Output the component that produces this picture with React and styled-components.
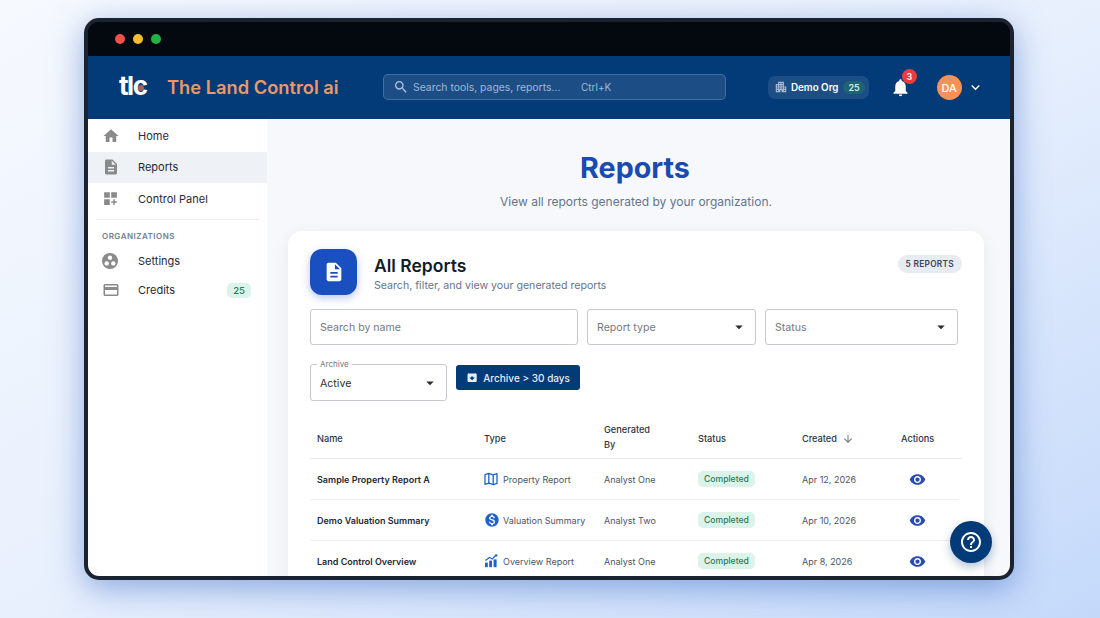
import styled, { createGlobalStyle } from "styled-components";
import {
  MdHome, MdDescription, MdDashboardCustomize, MdCreditCard,
  MdMonetizationOn, MdVisibility, MdArchive, MdArrowDropDown, MdArrowDownward,
  MdNotifications, MdKeyboardArrowDown, MdHelpOutline, MdSearch, MdApartment,
} from "react-icons/md";

const GlobalStyle = createGlobalStyle`
  html, body { margin: 0; padding: 0; height: 100%; overflow: hidden; }
  body { font-family: Inter, "Liberation Sans", sans-serif; color: #1a2433; }
  * { box-sizing: border-box; }
`;

const reports = [
  { name: "Sample Property Report A", type: "Property Report", kind: "map", by: "Analyst One", date: "Apr 12, 2026" },
  { name: "Demo Valuation Summary", type: "Valuation Summary", kind: "money", by: "Analyst Two", date: "Apr 10, 2026" },
  { name: "Land Control Overview", type: "Overview Report", kind: "chart", by: "Analyst One", date: "Apr 8, 2026" },
];

const MapIcon = () => (
  <svg width="14" height="14" viewBox="0 0 14 14" fill="none" stroke="#1f62c9" strokeWidth="1.3" strokeLinejoin="round">
    <path d="M1 2.6 4.8 1.4 9.2 2.8 13 1.6V11.4L9.2 12.6 4.8 11.2 1 12.4Z" />
    <path d="M4.8 1.4V11.2M9.2 2.8V12.6" />
  </svg>
);

const ChartIcon = () => (
  <svg width="14" height="14" viewBox="0 0 14 14" fill="#1f62c9">
    <rect x="1" y="8.6" width="2.8" height="4.6" />
    <rect x="5.2" y="6.6" width="2.8" height="6.6" />
    <rect x="9.6" y="5.4" width="3" height="7.8" />
    <path d="M1.4 6.4 5.6 3.4 8.4 5 12 1" fill="none" stroke="#1f62c9" strokeWidth="1.2" />
    <circle cx="12.2" cy="1.4" r="1.2" />
  </svg>
);

const SettingsIcon = () => (
  <svg width="16" height="16" viewBox="0 0 16 16">
    <circle cx="8" cy="8" r="8" fill="#8a8a8a" />
    <circle cx="8" cy="4.8" r="2.2" fill="#fff" />
    <circle cx="4.7" cy="10.4" r="2.2" fill="#fff" />
    <circle cx="11.3" cy="10.4" r="2.2" fill="#fff" />
  </svg>
);

const typeIcons = {
  map: <MapIcon />,
  money: <MdMonetizationOn size={16} color="#1f62c9" />,
  chart: <ChartIcon />,
};

const App = () => {
  return (
    <Page>
      <GlobalStyle />
      <Frame>
        <TitleBar>
          <Dot $color="#f0504a" />
          <Dot $color="#f7bd2b" />
          <Dot $color="#22b348" />
        </TitleBar>
        <Header>
          <Logo>tl<LogoC>c<LogoDot /></LogoC></Logo>
          <Brand>The Land Control ai</Brand>
          <TopSearch>
            <MdSearch size={16} color="#a9c4e6" />
            <TopSearchText>Search tools, pages, reports...</TopSearchText>
            <Shortcut>Ctrl+K</Shortcut>
          </TopSearch>
          <OrgChip>
            <MdApartment size={14} color="#a9b9cf" />
            <OrgName>Demo Org</OrgName>
            <OrgCount>25</OrgCount>
          </OrgChip>
          <Bell>
            <MdNotifications size={21} color="#fff" />
            <BellBadge>3</BellBadge>
          </Bell>
          <Avatar>DA</Avatar>
          <MdKeyboardArrowDown size={17} color="#fff" />
        </Header>
        <Body>
          <Sidebar>
            <NavItem><NavIcon><MdHome size={18} /></NavIcon>Home</NavItem>
            <NavItem $active><NavIcon><MdDescription size={18} /></NavIcon>Reports</NavItem>
            <NavItem><NavIcon><MdDashboardCustomize size={17} /></NavIcon>Control Panel</NavItem>
            <Divider />
            <NavHeading>ORGANIZATIONS</NavHeading>
            <NavItem $height={29.5}><NavIcon><SettingsIcon /></NavIcon>Settings</NavItem>
            <NavItem $height={28}>
              <NavIcon><MdCreditCard size={18} /></NavIcon>Credits
              <CreditBadge>25</CreditBadge>
            </NavItem>
          </Sidebar>
          <Main>
            <PageTitle>Reports</PageTitle>
            <PageSub>View all reports generated by your organization.</PageSub>
            <Card>
              <CardHead>
                <CardIcon><MdDescription size={22} color="#fff" /></CardIcon>
                <CardText>
                  <CardTitle>All Reports</CardTitle>
                  <CardSub>Search, filter, and view your generated reports</CardSub>
                </CardText>
                <CountPill>5 REPORTS</CountPill>
              </CardHead>
              <Filters>
                <Field>Search by name</Field>
                <Field>Report type<Caret><MdArrowDropDown size={18} /></Caret></Field>
                <Field>Status<Caret><MdArrowDropDown size={18} /></Caret></Field>
              </Filters>
              <ArchiveRow>
                <ArchiveField>
                  <Legend>Archive</Legend>
                  Active
                  <Caret><MdArrowDropDown size={18} /></Caret>
                </ArchiveField>
                <ArchiveButton><MdArchive size={13} />Archive &gt; 30 days</ArchiveButton>
              </ArchiveRow>
              <HeadRow>
                <span>Name</span>
                <span>Type</span>
                <GeneratedCell>Generated By</GeneratedCell>
                <span>Status</span>
                <SortCell>Created <MdArrowDownward size={12} color="#6b7280" /></SortCell>
                <span>Actions</span>
              </HeadRow>
              {reports.map((r) => (
                <Row key={r.name}>
                  <NameCell>{r.name}</NameCell>
                  <TypeCell><TypeIcon>{typeIcons[r.kind]}</TypeIcon>{r.type}</TypeCell>
                  <span>{r.by}</span>
                  <span><StatusChip>Completed</StatusChip></span>
                  <span>{r.date}</span>
                  <ActionCell><MdVisibility size={17} color="#2b4bb0" /></ActionCell>
                </Row>
              ))}
            </Card>
            <HelpFab><MdHelpOutline size={24} color="#fff" /></HelpFab>
          </Main>
        </Body>
      </Frame>
    </Page>
  );
};

const Page = styled.div`
  width: 1100px;
  height: 618px;
  padding: 18px 86px 38px 84px;
  overflow: hidden;
  background: linear-gradient(150deg, #f6f9fe 0%, #e8f0fd 50%, #c4d9fa 100%);
`;
const Frame = styled.div`
  width: 930px;
  height: 562px;
  display: flex;
  flex-direction: column;
  border: 4px solid #1b2230;
  border-radius: 15px;
  overflow: hidden;
  background: #04080f;
  box-shadow: 0 8px 32px rgba(50, 100, 195, 0.5);
`;
const TitleBar = styled.div`
  height: 34px;
  flex: none;
  display: flex;
  align-items: center;
  gap: 8px;
  padding-left: 27px;
  background: #04080f;
`;
const Dot = styled.span`
  width: 10px;
  height: 10px;
  border-radius: 50%;
  background: ${(p) => p.$color};
`;
const Header = styled.header`
  height: 63px;
  flex: none;
  display: flex;
  align-items: center;
  padding-left: 31px;
  background: #033a78;
`;
const Logo = styled.div`
  width: 48px;
  font-size: 26px;
  font-weight: 700;
  letter-spacing: -1.5px;
  color: #fff;
  line-height: 1;
  margin-top: -4px;
  display: flex;
`;
const LogoC = styled.span`
  position: relative;
`;
const LogoDot = styled.i`
  position: absolute;
  left: 5px;
  top: 12px;
  width: 6px;
  height: 6px;
  border-radius: 50%;
  background: #a8605f;
`;
const Brand = styled.div`
  width: 216px;
  margin-top: -2px;
  font-size: 18.3px;
  font-weight: 600;
  color: #e9996a;
  white-space: nowrap;
`;
const TopSearch = styled.div`
  width: 343px;
  height: 26px;
  display: flex;
  align-items: center;
  padding-left: 9px;
  margin-top: -1px;
  border: 1px solid rgba(150, 190, 235, 0.3);
  border-radius: 5px;
  background: rgba(255, 255, 255, 0.1);
`;
const TopSearchText = styled.span`
  margin-left: 4px;
  width: 168px;
  font-size: 10.4px;
  color: #9db8d9;
  white-space: nowrap;
`;
const Shortcut = styled.span`
  font-size: 10px;
  color: #9db8d9;
`;
const OrgChip = styled.div`
  height: 23px;
  display: flex;
  align-items: center;
  gap: 3px;
  margin: -1px 0 0 42px;
  padding: 0 4px 0 6px;
  border-radius: 7px;
  background: rgba(255, 255, 255, 0.1);
`;
const OrgName = styled.span`
  font-size: 9.8px;
  font-weight: 600;
  color: #fff;
  white-space: nowrap;
`;
const OrgCount = styled.span`
  margin-left: 2px;
  padding: 1px 5px;
  border-radius: 8px;
  font-size: 9px;
  font-weight: 600;
  color: #d5ebe6;
  background: #1d6472;
`;
const Bell = styled.div`
  position: relative;
  display: flex;
  margin-left: 21px;
`;
const BellBadge = styled.span`
  position: absolute;
  top: -8px;
  right: -6px;
  width: 15px;
  height: 15px;
  border-radius: 50%;
  display: flex;
  align-items: center;
  justify-content: center;
  font-size: 9px;
  font-weight: 600;
  color: #fff;
  background: #ee3b3b;
`;
const Avatar = styled.div`
  width: 25px;
  height: 25px;
  margin: 0 5px 0 26px;
  border-radius: 50%;
  display: flex;
  align-items: center;
  justify-content: center;
  font-size: 11px;
  font-weight: 500;
  color: #fff;
  background: #f59357;
`;
const Body = styled.div`
  flex: 1;
  min-height: 0;
  display: flex;
`;
const Sidebar = styled.nav`
  width: 179px;
  flex: none;
  background: #fff;
  box-shadow: 1px 0 4px rgba(30, 50, 90, 0.12);
  padding-top: 1px;
  position: relative;
`;
const NavItem = styled.div`
  height: ${(p) => p.$height || 31.5}px;
  display: flex;
  align-items: center;
  padding: 0 16px 0 14px;
  font-size: 11px;
  color: #1f2937;
  background: ${(p) => (p.$active ? "#eef2f6" : "transparent")};
`;
const NavIcon = styled.span`
  width: 36px;
  display: flex;
  color: #8a8a8a;
`;
const Divider = styled.div`
  height: 1px;
  margin: 4px 8px 0;
  background: #eceef1;
`;
const NavHeading = styled.div`
  padding: 11px 0 6px 14px;
  font-size: 8px;
  font-weight: 600;
  letter-spacing: 0.5px;
  line-height: 10px;
  color: #76808f;
`;
const CreditBadge = styled.span`
  margin-left: auto;
  padding: 2px 6px;
  border-radius: 5px;
  font-size: 9.5px;
  font-weight: 500;
  color: #2c7a5b;
  background: #dcf3ea;
`;
const Main = styled.main`
  flex: 1;
  min-width: 0;
  position: relative;
  overflow: hidden;
  padding: 0 26px 0 21px;
  background: #f6f8fb;
`;
const PageTitle = styled.h1`
  margin: 30px 0 0;
  padding-right: 2px;
  text-align: center;
  font-size: 28.7px;
  line-height: 38px;
  font-weight: 700;
  color: #1a4bb0;
`;
const PageSub = styled.p`
  margin: 6px 0 0;
  text-align: center;
  font-size: 12px;
  line-height: 18px;
  color: #66748b;
`;
const Card = styled.section`
  margin-top: 20px;
  padding: 18px 22px 30px;
  border-radius: 14px;
  background: #fff;
  box-shadow: 0 4px 16px rgba(30, 50, 90, 0.07);
`;
const CardHead = styled.div`
  display: flex;
  align-items: flex-start;
`;
const CardIcon = styled.div`
  width: 47px;
  height: 46px;
  flex: none;
  display: flex;
  align-items: center;
  justify-content: center;
  border-radius: 12px;
  background: #1a4fc0;
  box-shadow: 0 3px 8px rgba(26, 79, 192, 0.3);
`;
const CardText = styled.div`
  margin: 7px 0 0 17px;
`;
const CardTitle = styled.div`
  font-size: 17.5px;
  font-weight: 600;
  line-height: 20px;
  color: #111b2a;
`;
const CardSub = styled.div`
  margin-top: 3px;
  font-size: 10.6px;
  line-height: 14px;
  color: #66748b;
`;
const CountPill = styled.span`
  margin: 6px 0 0 auto;
  padding: 3px 8px;
  border-radius: 10px;
  font-size: 8.3px;
  line-height: 12px;
  font-weight: 600;
  letter-spacing: 0.3px;
  color: #3c4758;
  background: #e7ebf2;
`;
const Filters = styled.div`
  display: grid;
  grid-template-columns: 268px 169px 193px;
  gap: 9px;
  margin-top: 14px;
`;
const Field = styled.div`
  height: 36px;
  position: relative;
  display: flex;
  align-items: center;
  padding-left: 9px;
  border: 1px solid #c6c9ce;
  border-radius: 3px;
  font-size: 10.6px;
  color: #74787f;
  background: #fff;
`;
const Caret = styled.span`
  position: absolute;
  right: 7px;
  top: 50%;
  transform: translateY(-50%);
  display: flex;
  color: #2c2c2c;
`;
const ArchiveRow = styled.div`
  display: flex;
  align-items: flex-start;
  gap: 9px;
  margin-top: 19px;
`;
const ArchiveField = styled(Field)`
  width: 137px;
  height: 37px;
  padding-top: 1px;
  color: #2a2f36;
`;
const Legend = styled.span`
  position: absolute;
  left: 6px;
  top: -6px;
  padding: 0 3px;
  font-size: 8px;
  line-height: 11px;
  color: #74787f;
  background: #fff;
`;
const ArchiveButton = styled.div`
  height: 25px;
  width: 124px;
  margin-top: 1px;
  display: flex;
  align-items: center;
  gap: 5px;
  padding: 0 10px;
  border-radius: 3px;
  font-size: 10px;
  font-weight: 500;
  white-space: nowrap;
  color: #e6eef8;
  background: #033a78;
`;
const cols = "167px 120px 94px 104px 99px 68px";
const HeadRow = styled.div`
  display: grid;
  grid-template-columns: ${cols};
  align-items: center;
  height: 40px;
  margin-top: 18px;
  padding-left: 7px;
  border-bottom: 1px solid #e8eaee;
  font-size: 9.2px;
  line-height: 15px;
  font-weight: 500;
  color: #2b3441;
`;
const GeneratedCell = styled.span`
  width: 50px;
  margin-top: -3px;
`;
const SortCell = styled.span`
  display: flex;
  align-items: center;
  gap: 5px;
`;
const Row = styled.div`
  display: grid;
  grid-template-columns: ${cols};
  align-items: center;
  height: 41px;
  margin-right: 3px;
  padding-left: 7px;
  border-bottom: 1.5px solid #eef0f3;
  font-size: 9px;
  color: #4b5563;
`;
const NameCell = styled.span`
  font-weight: 600;
  color: #1f2937;
`;
const TypeCell = styled.span`
  display: flex;
  align-items: center;
  white-space: nowrap;
`;
const TypeIcon = styled.span`
  width: 19px;
  display: flex;
`;
const StatusChip = styled.span`
  display: inline-block;
  padding: 3px 6px;
  border-radius: 5px;
  font-size: 8.6px;
  font-weight: 500;
  color: #2c7a5b;
  background: #dcf3ea;
`;
const ActionCell = styled.span`
  display: flex;
  padding-left: 8px;
`;
const HelpFab = styled.div`
  position: absolute;
  right: 18px;
  bottom: 13px;
  width: 42px;
  height: 42px;
  border-radius: 50%;
  display: flex;
  align-items: center;
  justify-content: center;
  background: #033a78;
  box-shadow: 0 4px 10px rgba(3, 58, 120, 0.3);
`;

export default App;
